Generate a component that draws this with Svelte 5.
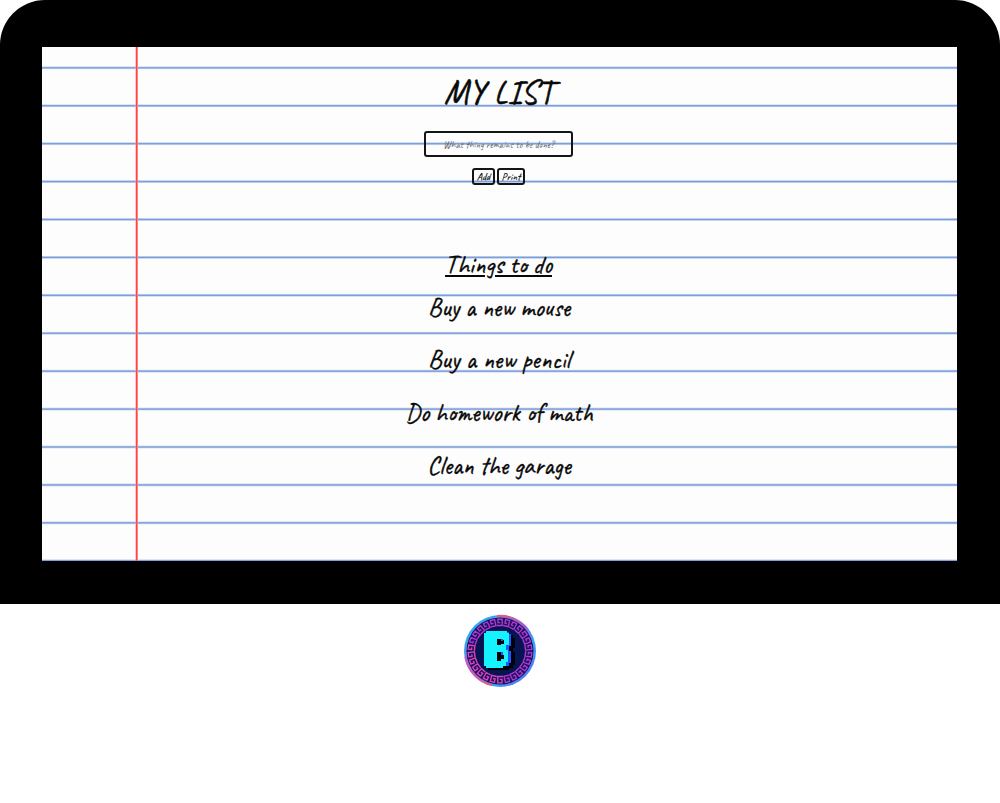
<script>
  const items = [
    { text: 'Buy a new mouse', width: 142 },
    { text: 'Buy a new pencil', width: 142 },
    { text: 'Do homework of math', width: 187.5 },
    { text: 'Clean the garage', width: 143.5 }
  ];
  const keys = Array.from({ length: 26 }, (_, i) => i * 360 / 26);
  const rules = Array.from({ length: 14 }, (_, i) => 21 + i * 37.92);
  let draft = $state('');

  function fit(node, width) {
    const base = parseFloat(getComputedStyle(node).fontSize);
    node.style.fontSize = `${base * width / node.getBoundingClientRect().width}px`;
  }
</script>

<main>
  <section class="board">
    <div class="paper">
      <svg class="lines" width="915" height="514" aria-hidden="true">
        {#each rules as y}
          <rect x="0" y={y - 1.6} width="915" height="2.8" fill="#cbdaf2" />
          <rect x="0" y={y - 0.9} width="915" height="1.4" fill="#7d9ed8" />
        {/each}
        <rect x="93.5" y="0" width="2.5" height="514" fill="#ff9292" />
        <rect x="94.1" y="0" width="1.1" height="514" fill="#fa4049" />
      </svg>
      <div class="content">
        <h1><span use:fit={109}>MY LIST</span></h1>
        <input bind:value={draft} placeholder="What thing remains to be done?" />
        <div class="actions">
          <button class="add"><span use:fit={13.5}>Add</span></button>
          <button class="print"><span use:fit={19}>Print</span></button>
        </div>
        <h2><span use:fit={107}>Things to do</span></h2>
        <ul>
          {#each items as item}
            <li><span use:fit={item.width}>{item.text}</span></li>
          {/each}
        </ul>
      </div>
    </div>
  </section>
  <footer>
    <svg width="74" height="74" viewBox="0 0 74 74" aria-hidden="true">
      <defs>
        <linearGradient id="rim" x1="0" y1="0" x2="1" y2="1">
          <stop offset="0" stop-color="#26a8ff" /><stop offset=".22" stop-color="#35a5f4" />
          <stop offset=".45" stop-color="#a55ad8" /><stop offset=".68" stop-color="#30a5ff" />
          <stop offset="1" stop-color="#7657e8" />
        </linearGradient>
        <linearGradient id="warm" x1="0" y1="0" x2="1" y2="0">
          <stop offset="0" stop-color="#c45ad0" /><stop offset=".5" stop-color="#e65e70" />
          <stop offset="1" stop-color="#9860dd" />
        </linearGradient>
      </defs>
      <circle cx="37" cy="37" r="36" fill="url(#rim)" />
      <path d="M34 2A35 35 0 0 1 65 16M2.5 43A35 35 0 0 0 29 71" fill="none" stroke="url(#warm)" stroke-width="2.2" />
      <circle cx="37" cy="37" r="33.5" fill="#17145b" />
      <circle cx="37" cy="37" r="24.5" fill="#071452" />
      <g fill="none" stroke-width="1.35">
        {#each keys as angle}
          <path transform="rotate({angle} 37 37)" stroke={angle > 170 && angle < 285 ? '#e040bd' : '#b336d5'} d="M37.2 8.6H35V5.2H39.2V11.5H34" />
        {/each}
      </g>
      <g shape-rendering="crispEdges">
        <path fill="#000009" d="M23 19H47V21H50V24H52V34H50V38H52V51H50V54H46V56H25V54H22V52H23Z" />
        <path fill="#1b5cff" d="M40 18H46V20H48V32H46V37H48V49H46V52H40Z" />
        <path fill="#14f3ff" fill-rule="evenodd" d="M23 17H44V19H46V31H43V36H45V48H43V52H40V54H23V52H21V19H23ZM34 25V31H38V29H41V26H38V25ZM34 38V47H38V45H41V41H38V38Z" />
        <path fill="#000009" d="M34 25H38V26H41V30H38V31H34ZM34 38H38V41H41V45H38V47H34Z" />
        <path fill="#1b5cff" d="M38 25H40V27H38ZM38 38H40V41H38Z" />
      </g>
    </svg>
  </footer>
</main>

<style>
  :global(body) { margin: 0; background: #fff; }
  main { height: 803px; overflow: hidden; font-family: Caveat, cursive; color: #080808; }
  .board { box-sizing: border-box; height: 604px; padding: 47px 43px 43px 42px; background: #000; border-radius: 45px 45px 0 0; }
  .paper { display: grid; height: 514px; background: #fdfdfd; overflow: hidden; }
  .lines, .content { grid-area: 1 / 1; }
  .content { z-index: 1; display: flex; flex-direction: column; align-items: center; }
  span { white-space: nowrap; }
  h1 { margin: 25px 2px 0 0; height: 40px; font-size: 33px; line-height: 40px; font-weight: 400; -webkit-text-stroke: .55px #080808; }
  input { box-sizing: border-box; width: 149px; height: 26px; margin: 19px 2px 0 0; padding: 1px; border: 2px solid #151515; border-radius: 3px; background: transparent; text-align: center; font: 10px Caveat, cursive; color: #222; }
  input::placeholder { color: #6c6c6c; opacity: 1; }
  .actions { display: flex; gap: 2px; margin: 10.5px 2px 0 0; }
  button { display: flex; align-items: center; justify-content: center; box-sizing: border-box; height: 17px; padding: 0; border: 2px solid #151515; border-radius: 3px; background: transparent; font: 9px Caveat, cursive; color: #111; }
  button span { -webkit-text-stroke: .15px #111; }
  .add { width: 23px; }
  .print { width: 28px; }
  h2 { margin: 65px 2px 0 0; height: 30px; font-size: 24px; line-height: 30px; font-weight: 400; -webkit-text-stroke: .35px #080808; }
  h2 span { text-decoration: underline; text-decoration-thickness: 2px; text-underline-offset: 2px; }
  ul { display: grid; gap: 22.7px; margin: 13.3px 1px 0 0; padding: 0; list-style: none; text-align: center; }
  li { height: 30px; font-size: 24px; line-height: 30px; font-weight: 400; -webkit-text-stroke: .35px #080808; }
  footer { display: flex; justify-content: center; padding-top: 10px; }
</style>
